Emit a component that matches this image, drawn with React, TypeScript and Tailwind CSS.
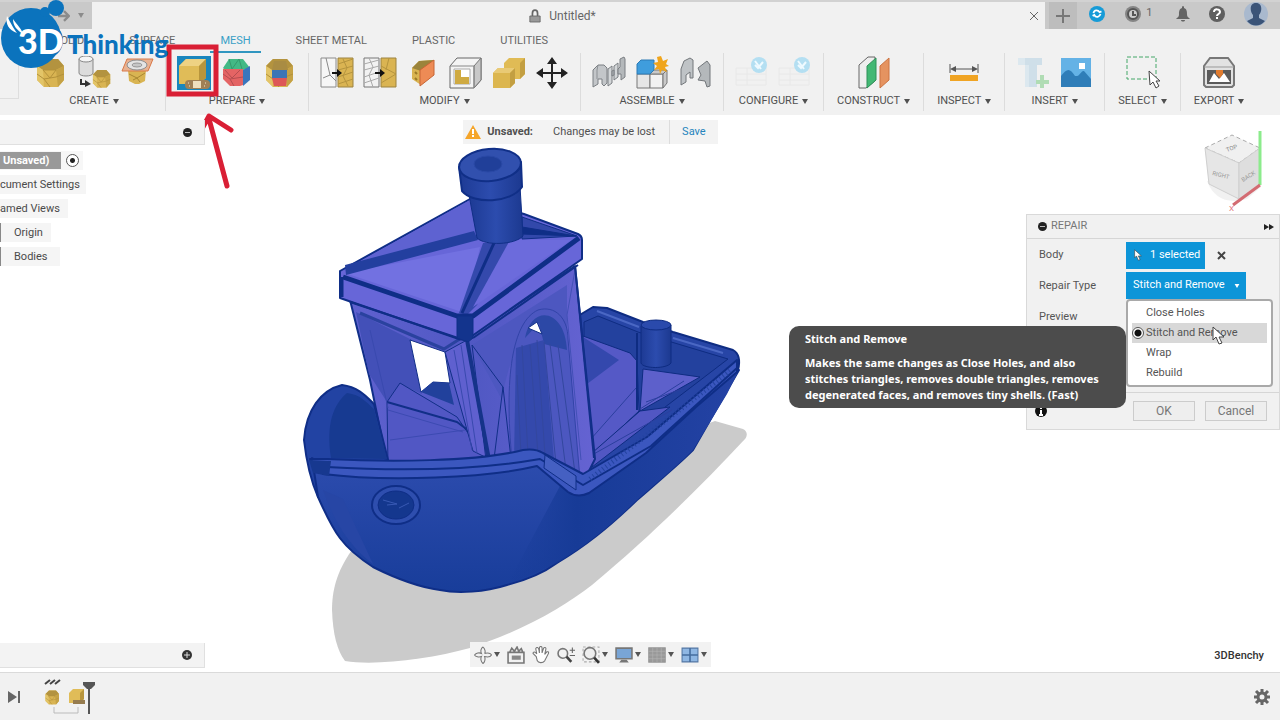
import React, { useState } from 'react';

interface IconProps {
  className?: string;
}

interface ToolGroup {
  label: string;
  tools: { name: string; icon: React.ReactNode; active?: boolean; disabled?: boolean }[];
}

const REPAIR_TYPES = ['Close Holes', 'Stitch and Remove', 'Wrap', 'Rebuild'];
const TABS = ['SOLID', 'SURFACE', 'MESH', 'SHEET METAL', 'PLASTIC', 'UTILITIES'];

const Icon: React.FC<{ children: React.ReactNode; className?: string }> = ({ children, className = 'size-[34px]' }) => (
  <svg viewBox="0 0 34 34" className={className} fill="none" aria-hidden="true">
    {children}
  </svg>
);

const Caret: React.FC<IconProps> = ({ className = 'h-[5px] w-[6px]' }) => (
  <svg viewBox="0 0 6 5" className={className} fill="currentColor" aria-hidden="true">
    <path d="M0 0h6L3 5z" />
  </svg>
);

/* faceted gold solid shared by several mesh tools */
const GoldMesh: React.FC<{ transform?: string }> = ({ transform }) => (
  <g transform={transform}>
    <path d="M3 10 10 3h14l6 7v14l-6 7H10l-7-7z" fill="#d9b452" />
    <path d="M3 10 10 3h14l6 7-8 4H9z" fill="#b3933f" />
    <path d="M3 10v14l7 7 -1-17z" fill="#e3c568" />
    <path d="M22 14l8-4v14l-6 7z" fill="#c5a245" />
    <path d="M9 14h13M3 18l7 5 12-2 8-3M10 23l6 8M9 14l7 8 6-8" stroke="#b3913a" />
  </g>
);

const CREATE_TOOLS = [
  {
    name: 'Insert Mesh',
    icon: (
      <Icon>
        <GoldMesh />
        <path d="M5 2 12-1l4 2-6 6-5-1z" fill="#3c93dc" />
      </Icon>
    ),
  },
  {
    name: 'Tessellate',
    icon: (
      <Icon>
        <path d="M2 3v14c0 4 14 4 14 0V3z" fill="#dcdcdc" stroke="#888" />
        <ellipse cx="9" cy="3" rx="7" ry="3" fill="#f5f5f5" stroke="#888" />
        <path d="M4 23v5h6" stroke="#333" strokeWidth="2" />
        <path d="m8 24 6 4-6 3z" fill="#333" />
        <GoldMesh transform="translate(14 12) scale(.64)" />
      </Icon>
    ),
  },
  {
    name: 'Mesh Section Sketch',
    icon: (
      <Icon>
        <path d="m8 14 1 11 6 3h4l6-3 1-11z" fill="#d9b452" />
        <path d="m9 18 8 4 8-5M13 24l4-2 3 4" stroke="#a98732" />
        <path d="M7 3h26l-5 12H2z" fill="#e9b291" stroke="#d97848" />
        <ellipse cx="17" cy="9" rx="10" ry="5" fill="#e4e4e4" stroke="#8d8d8d" />
        <ellipse cx="17" cy="9" rx="5" ry="2" fill="#c6c6c6" stroke="#999" />
      </Icon>
    ),
  },
];

const PREPARE_TOOLS = [
  {
    name: 'Repair',
    active: true,
    icon: (
      <Icon>
        <path d="M2 10 9 3h20v19l-7 6H2z" fill="#e0bc58" />
        <path d="M2 10 9 3h20l-7 7z" fill="#eed283" />
        <path d="M22 10 29 3v19l-7 6z" fill="#b8953c" />
        <rect x="8" y="24" width="25" height="9" rx="4" fill="#a08055" />
        <rect x="16" y="25" width="8" height="7" fill="#efdfbe" />
        <path d="M11 27h1m0 3h1m15-3h1m-2 3h1" stroke="#f4e6c9" />
      </Icon>
    ),
  },
  {
    name: 'Generate Face Groups',
    icon: (
      <Icon>
        <path d="M3 12 9 3h14l7 9-7 2H5z" fill="#42b985" />
        <path d="M3 13h20v16l-3 1H10l-7-7z" fill="#e46464" />
        <path d="m23 14 7-4v14l-7 6z" fill="#3a76bd" />
        <path d="M3 18l7 5 13-2M10 23l4 7M5 14l7 8 8-8" stroke="#b44d50" />
        <path d="m9 3 3 10 7-10 3 10" stroke="#349a6c" />
      </Icon>
    ),
  },
  {
    name: 'Combine Face Groups',
    icon: (
      <Icon>
        <GoldMesh />
        <path d="m9 14 2-9h12l2 9z" fill="#a98c43" />
        <path d="M9 14h15v8H9z" fill="#3c75b5" />
        <path d="M9 22h15l-1 8H11z" fill="#dd5757" />
      </Icon>
    ),
  },
];

const MODIFY_TOOLS = [
  {
    name: 'Remesh',
    icon: (
      <Icon>
        <path d="M1 2h15v29H1zM6 2l4 17-7 3M10 19l6 6" stroke="#8a8a8a" fill="#f6f6f6" />
        <path d="M18 2h15v29H18z" fill="#dab452" stroke="#9c8340" />
        <path d="m18 8 15-5m-15 11 15-4m-15 11 15-5m-15 12 15-5M23 3l4 9-4 8 5 10" stroke="#b5943e" />
        <path d="M12 17h6" stroke="#111" strokeWidth="2" />
        <path d="m17 13 5 4-5 4z" fill="#111" />
      </Icon>
    ),
  },
  {
    name: 'Reduce',
    icon: (
      <Icon>
        <path d="M1 2h15v29H1z" stroke="#777" fill="#f2f2f2" />
        <path d="m1 8 15-4M1 14l15-4M1 21l15-5M1 27l15-5M6 2l4 9-4 8 4 12" stroke="#aaa" />
        <path d="M18 2h15v29H18z" fill="#dab452" stroke="#9c8340" />
        <path d="m18 10 15 8-15 9M26 2l-3 12" stroke="#b5943e" />
        <path d="M12 17h6" stroke="#111" strokeWidth="2" />
        <path d="m17 13 5 4-5 4z" fill="#111" />
      </Icon>
    ),
  },
  {
    name: 'Plane Cut',
    icon: (
      <Icon>
        <path d="m6 12 7-7 15-1-13 11v14l-9-6z" fill="#d9b452" />
        <path d="m6 12 7-7 15-1-13 11z" fill="#9b843b" />
        <path d="m9 16 2 2m-2 4 2 2" stroke="#9b7a29" strokeWidth="2" />
        <path d="M14 14 28 4v15L14 30z" fill="#ed8b55" stroke="#c76535" />
      </Icon>
    ),
  },
  {
    name: 'Shell',
    icon: (
      <Icon>
        <path d="M1 10 8 2h24v22l-7 8H1z" fill="#f4f4f4" stroke="#666" strokeLinejoin="round" />
        <path d="M25 10 32 2v22l-7 8z" fill="#c8c8c8" stroke="#777" />
        <path d="M1 10h24v22" stroke="#888" />
        <path d="M5 13h16v15H5z" fill="#fff" stroke="#aaa" />
        <path d="M6 14h6v7h8v7H6z" fill="#cfaa42" />
      </Icon>
    ),
  },
  {
    name: 'Combine',
    icon: (
      <Icon>
        <path d="m12 7 5-5h16v16l-5 5H12z" fill="#e0bb55" />
        <path d="m28 7 5-5v16l-5 5z" fill="#c39f42" />
        <path d="m1 17 5-5h17v15l-5 5H1z" fill="#dcb64f" />
        <path d="m1 17 5-5h17l-5 5z" fill="#e9ca75" />
        <path d="m18 17 5-5v15l-5 5z" fill="#c39f42" />
      </Icon>
    ),
  },
  {
    name: 'Move/Copy',
    icon: (
      <Icon>
        <path d="M17 6v22M6 17h22" stroke="#222" strokeWidth="2" />
        <path d="m17 1 5 7H12zm0 32 5-7H12zM1 17l7-5v10zm32 0-7-5v10z" fill="#222" />
      </Icon>
    ),
  },
];

const ASSEMBLE_TOOLS = [
  {
    name: 'Joint',
    icon: (
      <Icon>
        <path d="m1 14 5-5h6l3 3v15l-3 3-2-2v-5H6v5l-5 3z" fill="#c3c6c9" stroke="#7b7f83" />
        <path d="m16 13 4-3v17l-4 3zM22 10l4-3v14l-4 3z" fill="#d3d6d8" stroke="#7b7f83" />
        <path d="m20 15 2-1v5l-2 1zM26 13l2-2V3l4-2 1 2v18l-4 3v-6h-3z" fill="#b4b8bb" stroke="#7b7f83" />
        <path d="m6 9-1 5v9" stroke="#8c9094" />
      </Icon>
    ),
  },
  {
    name: 'New Component',
    icon: (
      <Icon>
        <path d="M2 18h13v14H2z" fill="#e6e6e6" stroke="#777" />
        <path d="M15 18h13v14H15z" fill="#f2f2f2" stroke="#777" />
        <path d="m15 18 4-4h13l-4 4zm13 0 4-4v13l-4 5z" fill="#c9c9c9" stroke="#777" />
        <path d="m2 8 4-4h13v10l-4 4H2z" fill="#3f9ddd" stroke="#2d7bb5" />
        <path d="m26 0 2 5 5-2-2 5 3 2-4 1 2 5-5-2-2 4-1-5-5 1 3-4-4-3 5-1-1-5z" fill="#f0a51c" />
      </Icon>
    ),
  },
  {
    name: 'As-built Joint',
    icon: (
      <Icon>
        <path d="m3 13 3-8 6-3 3 2v18h-3v-6l-4 3v7l-5 3z" fill="#bfc3c6" stroke="#73777b" />
        <path d="m20 12 9-7 3 4v21l-3 1-2-6-7-1 3-5z" fill="#b4b8bb" stroke="#73777b" />
      </Icon>
    ),
  },
];

const CONFIGURE_ICON = (
  <Icon>
    <path d="M1 12h30v17H1zM1 18h30M1 24h30M12 12v17" stroke="#e8e8e8" />
    <circle cx="24" cy="9" r="8" fill="#b4dff2" />
    <path d="m20 9 3 3 5-6M20 5l6 8" stroke="#effaff" strokeWidth="2" />
  </Icon>
);

const GROUPS: ToolGroup[] = [
  { label: 'CREATE', tools: CREATE_TOOLS },
  { label: 'PREPARE', tools: PREPARE_TOOLS },
  { label: 'MODIFY', tools: MODIFY_TOOLS },
  { label: 'ASSEMBLE', tools: ASSEMBLE_TOOLS },
  {
    label: 'CONFIGURE',
    tools: [
      { name: 'Configure', icon: CONFIGURE_ICON, disabled: true },
      { name: 'Configuration Table', icon: CONFIGURE_ICON, disabled: true },
    ],
  },
  {
    label: 'CONSTRUCT',
    tools: [
      {
        name: 'Offset Plane',
        icon: (
          <Icon>
            <path d="M2 9 11 1h7v24l-9 7H2z" fill="#eee" stroke="#666" />
            <path d="m10 10 9-8v22l-9 8z" fill="#43b874" stroke="#2f9159" />
            <path d="m23 10 9-8v22l-9 8z" fill="#e59360" stroke="#cc7340" />
          </Icon>
        ),
      },
    ],
  },
  {
    label: 'INSPECT',
    tools: [
      {
        name: 'Measure',
        icon: (
          <Icon>
            <path d="M3 8v9m28-9v9M5 13h24" stroke="#555" />
            <path d="m3 13 6-3v6zm28 0-6-3v6z" fill="#555" />
            <path d="M3 19h28v6H3z" fill="#f0a423" />
          </Icon>
        ),
      },
    ],
  },
  {
    label: 'INSERT',
    tools: [
      {
        name: 'Insert Fastener',
        disabled: true,
        icon: (
          <Icon>
            <path d="M2 2h24v7h-5v22H9V9H2z" fill="#cfdfe9" />
            <path d="M2 2h7v7H2zm7 7h4v22H9z" fill="#dce8ef" />
            <path d="M26 19v13m-6-6h13" stroke="#b0dcb4" strokeWidth="4" />
          </Icon>
        ),
      },
      {
        name: 'Decal',
        icon: (
          <Icon>
            <path d="M2 2h30v29H2z" fill="#64b2e6" />
            <path d="M2 20c6-8 9-8 14 0 5 1 6-6 9-5l7 8v8H2z" fill="#2f7db8" />
            <path d="M20 7h6v6h-6z" fill="#fff" />
          </Icon>
        ),
      },
    ],
  },
  {
    label: 'SELECT',
    tools: [
      {
        name: 'Select',
        icon: (
          <Icon>
            <path d="M1 1h29v22H1z" stroke="#44a768" strokeDasharray="4 2" />
            <path d="m23 15 1 14 3-3 3 6 3-2-3-5h4z" fill="#fff" stroke="#444" />
          </Icon>
        ),
      },
    ],
  },
  {
    label: 'EXPORT',
    tools: [
      {
        name: '3D Print',
        icon: (
          <Icon>
            <path d="m2 10 6-8h18l6 8v19l-2 2H4l-2-2z" fill="#e2e2e2" stroke="#777" strokeWidth="2" />
            <path d="M5 14h24v14H5z" fill="#5b5b5b" />
            <path d="M2 11h30" stroke="#999" />
            <path d="m7 26 5-9 5 6 5-6 6 9z" fill="#fff" />
            <path d="M14 14h7v4l-3 4-4-4z" fill="#e17c2f" />
          </Icon>
        ),
      },
    ],
  },
];

const Logo: React.FC = () => (
  <svg viewBox="0 0 170 70" className="pointer-events-none absolute left-0 top-0 z-20 w-[170px]" role="img" aria-label="3D Thinking">
    <g fill="#0b73bd">
      <circle cx="31" cy="38" r="30" />
      <circle cx="56" cy="8" r="8" />
      <circle cx="45" cy="12" r="5" />
      <path d="M40 24h8c20 0 20 33 0 33H38z" />
    </g>
    <path d="M7 16c-2 8 2 14 10 17-3-4-6-9-10-17zM13 19c0 7 4 11 10 15-2-6-5-8-10-15z" fill="#fff" />
    <text x="18" y="54" fontSize="34" fontWeight="900" fontFamily="Lato, sans-serif" fill="#fff">
      3D
    </text>
    <text x="67" y="54" fontSize="26" fontWeight="900" fontFamily="Lato, sans-serif" fill="#0b73bd">
      Thinking
    </text>
  </svg>
);

const TitleBar: React.FC = () => (
  <div className="flex h-[29px] items-stretch border-t-2 border-[#d2d2d2] bg-[#c9c9c9]">
    <div className="flex w-[92px] items-center justify-end gap-2 pr-2 text-[#8b8b8b]">
      <svg viewBox="0 0 10 10" className="size-3" fill="none" stroke="currentColor" strokeWidth="2" aria-hidden="true">
        <path d="M0 5h9M5 1l4 4-4 4" />
      </svg>
      <Caret />
    </div>
    <div className="flex flex-1 items-center bg-[#f1f1f1] pr-[6px]">
      <div className="flex flex-1 items-center justify-center gap-2 pl-1 text-xs text-[#666]">
        <svg viewBox="0 0 14 16" className="h-[14px] w-3" fill="none" aria-hidden="true">
          <path d="M4 8V5c0-5 6-5 6 0v3" stroke="#666" strokeWidth="2" />
          <path d="M1 8h12v7H1z" fill="#999" stroke="#666" />
        </svg>
        Untitled*
      </div>
      <button aria-label="Close tab" className="text-[#666]">
        <svg viewBox="0 0 10 10" className="size-[10px]" stroke="currentColor" aria-hidden="true">
          <path d="m1 1 8 8m0-8L1 9" />
        </svg>
      </button>
    </div>
    <div className="flex w-[235px] items-center pl-1 pr-3">
      <button aria-label="New tab" className="mr-3 flex h-full w-[28px] items-center justify-center bg-[#bdbdbd]">
        <svg viewBox="0 0 14 14" className="size-[14px]" stroke="#777" strokeWidth="2" aria-hidden="true">
          <path d="M7 0v14M0 7h14" />
        </svg>
      </button>
      <div className="flex flex-1 items-center justify-between pb-1">
        <button aria-label="Extensions">
          <svg viewBox="0 0 18 18" className="size-4" fill="none" aria-hidden="true">
            <circle cx="9" cy="9" r="9" fill="#169bd7" />
            <path d="M5 8c1-4 5-4 7-1l2-1M4 11l2-1c2 4 6 2 7-1" stroke="#fff" strokeWidth="2" />
          </svg>
        </button>
        <button className="flex items-center gap-1 text-[11px] text-[#666]" aria-label="Job status 1">
          <svg viewBox="0 0 18 18" className="size-[18px]" fill="none" aria-hidden="true">
            <circle cx="9" cy="9" r="8" fill="#858585" />
            <circle cx="9" cy="9" r="5" fill="#ccc" stroke="#555" strokeWidth="2" />
            <path d="M9 6v4h3" stroke="#555" strokeWidth="2" />
          </svg>
          1
        </button>
        <button aria-label="Notifications" className="ml-1">
          <svg viewBox="0 0 14 16" className="h-4 w-[14px]" fill="#636363" aria-hidden="true">
            <path d="M7 0c1 0 1 1 1 2 3 1 3 4 3 6 0 3 1 3 3 5H0c2-2 3-2 3-5 0-2 0-5 3-6 0-1 0-2 1-2zM5 14h4c0 2-4 2-4 0z" />
          </svg>
        </button>
        <button aria-label="Help">
          <svg viewBox="0 0 16 16" className="size-4" fill="none" aria-hidden="true">
            <circle cx="8" cy="8" r="8" fill="#5f5f5f" />
            <path d="M5 6c0-4 6-3 6 0 0 2-3 2-3 4m0 1v2" stroke="#fff" strokeWidth="2" />
          </svg>
        </button>
        <button aria-label="Account">
          <svg viewBox="0 0 24 24" className="size-6" aria-hidden="true">
            <circle cx="12" cy="12" r="12" fill="#a9b9ce" />
            <path d="M12 1c7 0 6 9 3 12v3l6 3c-5 6-13 6-18 0l6-3v-3C6 10 5 1 12 1z" fill="#3b5478" />
          </svg>
        </button>
      </div>
    </div>
  </div>
);

const Annotation: React.FC = () => (
  <svg viewBox="0 0 68 146" className="pointer-events-none absolute -left-[11px] -top-[12px] z-10 w-[68px] max-w-none" fill="none" stroke="#d91f35" aria-hidden="true">
    <path d="M3 3h47v47H3z" strokeWidth="5" />
    <path d="m61 142-18-67M31 94l12-22 22 14" strokeWidth="5" strokeLinecap="round" strokeLinejoin="round" />
  </svg>
);

const Ribbon: React.FC = () => (
  <div className="flex h-[62px] items-stretch pb-1">
    <div className="mb-3 mr-1 w-[19px] border-b border-r border-[#dedede]" />
    {GROUPS.map((group) => (
      <div
        key={group.label}
        className={`flex flex-col items-center border-r border-[#dcdcdc] last:border-r-0 ${group.tools.length === 1 ? 'px-[10px]' : 'px-[11px]'}`}
      >
        <div className="flex gap-[9px] pt-[3px]">
          {group.tools.map((tool) => (
            <button
              key={tool.name}
              aria-label={tool.name}
              disabled={tool.disabled}
              className={`relative ${tool.active ? 'bg-[#1a86bd]' : ''}`}
            >
              {tool.icon}
              {tool.active && <Annotation />}
            </button>
          ))}
        </div>
        <button className="flex items-center gap-1 px-[3px] pt-1 text-[11px] leading-[14px] text-[#505050]">
          {group.label} <Caret />
        </button>
      </div>
    ))}
  </div>
);

const Boat: React.FC = () => (
  <svg viewBox="0 115 1280 557" className="absolute inset-0 h-full w-full" role="img" aria-label="3DBenchy mesh body">
    <defs>
      <linearGradient id="hull" x1="0" y1="0" x2="0" y2="1">
        <stop offset="0" stopColor="#3f55bb" />
        <stop offset=".4" stopColor="#2d4cae" />
        <stop offset="1" stopColor="#183d9a" />
      </linearGradient>
      <linearGradient id="side" x1="0" y1="0" x2="1" y2="0">
        <stop offset="0" stopColor="#173b97" stopOpacity="0" />
        <stop offset=".3" stopColor="#173b97" />
        <stop offset="1" stopColor="#2442a4" />
      </linearGradient>
      <linearGradient id="wall" x1="0" y1="0" x2="1" y2="0">
        <stop offset="0" stopColor="#5f61cf" />
        <stop offset=".5" stopColor="#5058c3" />
        <stop offset="1" stopColor="#6563d2" />
      </linearGradient>
      <linearGradient id="stack" x1="0" y1="0" x2="1" y2="0">
        <stop offset="0" stopColor="#1d3a94" />
        <stop offset=".5" stopColor="#2c4cae" />
        <stop offset="1" stopColor="#1c3990" />
      </linearGradient>
    </defs>
    <path d="M352 550c-16 22-20 42-20 60 1 25 5 40 13 51 30 5 85-2 125-13 55-18 95-42 122-63 60-50 110-100 153-146 3-4 2-8-2-10l-28-8z" fill="#cbcbcb" />

    {/* stern */}
    <g stroke="#0e2c82" strokeLinejoin="round">
      <path d="M578 316l15-9 14 1 36 14 30 10 60 18c7 4 7 12 5 20L590 492l-12-35z" fill="#2745a6" strokeWidth="2" />
      <path d="M584 322l14-6 40 16 90 27-144 110z" fill="#23419e" />
      <path d="M583 336l47 17 7 8 2 50-47 44z" fill="#5559c6" strokeWidth="1" />
      <path d="M583 337l36 23-32 24z" fill="#3448ad" stroke="none" />
      <path d="M643 369l57 8-60 34z" fill="#5d60cb" strokeWidth="1" />
      <path d="M640 411l30-4-78 60v-14z" fill="#5257c3" strokeWidth="1" />
      <path d="m640 409 44-28M646 402l44-16M590 440l46-52M592 455l80-45" fill="none" stroke="#2b3f9f" />
      <path d="M637 333v77" fill="none" strokeWidth="2" />
      <path d="M641 326v37c2 6 26 6 30 0v-38z" fill="url(#stack)" strokeWidth="1" />
      <ellipse cx="656" cy="325" rx="15" ry="5" fill="#2a4aac" />
      <path d="m597 311 42 16m34 11 50 15" fill="none" stroke="#4a67c4" strokeWidth="2" />
    </g>

    {/* cabin */}
    <g stroke="#112f88" strokeLinejoin="round">
      <path d="M350 300l117 38 108-72 20 193-12 24-45-24-150 9-18-88z" fill="url(#wall)" strokeWidth="2" />
      <path d="M356 312l56 28 10 54-22-10-13 18-18-28z" fill="#4350b8" stroke="none" />
      <path d="M387 402l13-19 57 34 26 38v10h-95z" fill="#5157c4" strokeWidth="1" />
      <path d="M387 402l70 20 12 9" fill="none" strokeWidth="2" />
      <path d="M390 440l75-10M388 410l75 22" fill="none" stroke="#3c4ab2" />
      <path d="M410 340l35 12 5 31-17-1-12 10z" fill="#fff" strokeWidth="1" />
      <path d="M421 392l12-10 16 1 5 22z" fill="#21419c" stroke="none" />
      <path d="M445 352l22-12 20 118-14-7z" fill="#5f60cf" strokeWidth="1" />
      <path d="M360 313l84 36 22-14" fill="none" strokeWidth="3" stroke="#2a429f" />
      <path d="M472 345l95-60v60l-26-10-14-7-18 40-8 30z" fill="#4d57c0" stroke="none" />
      <path d="M512 460c-8-82 0-138 26-150 17-5 30 8 30 29l12 140-20-16-24-14z" fill="#4c57c0" stroke="#3244a8" />
      <path d="M525 338c6-34 40-30 42 12l-23-6-5-21z" fill="#2c48a6" stroke="none" />
      <path d="M516 348l28-8 10 120-14 2-26-2z" fill="#3449ac" stroke="none" />
      <path d="M528 328l9-6 5 12z" fill="#fff" strokeWidth="1" />
      <path d="M472 345l31 42-9 72-8 1zM503 387l8 72" fill="none" strokeWidth="1" />
      <path d="M522 345l6 110M530 345l8 110M537 340l8 115M544 342l12 122M550 344l16 126M558 345l17 128M517 375l4 80" fill="none" stroke="#33479f" />
      <path d="M575 270l-8 45 14 145" fill="none" stroke="#4250b6" />
      <path d="M467 340l22 120" fill="none" strokeWidth="4" stroke="#153389" />
      <path d="M575 266l19 192" fill="none" strokeWidth="2" />
      <path d="M461 345l16 108M454 350l18 100M370 330l18 78" fill="none" stroke="#3949af" />
    </g>

    {/* roof */}
    <g stroke="#0f2e87" strokeLinejoin="round">
      <path d="M340 271l130-72 54 15 54 20q4 2 4 6v19l-110 77q-8 6-16 2l-116-40v-25z" fill="#6766d8" strokeWidth="2" />
      <path d="M343 271l127-71 8 36z" fill="#5e62d1" stroke="none" />
      <path d="M345 273l120 40 15-66z" fill="#7271e1" stroke="none" />
      <path d="M345 265l129-34 4 9-132 35z" fill="#233f9f" stroke="none" />
      <path d="M483 243h27l-33 62-10 10-8-2z" fill="#3449ac" stroke="none" />
      <path d="M494 243l-32 70" fill="none" strokeWidth="3" />
      <path d="M510 240h61l-98 67z" fill="#6c6bdc" stroke="none" />
      <path d="M522 217l55 19-55 3z" fill="#3248aa" strokeWidth="1" />
      <path d="M522 227l54 9-54-2z" fill="#0f2e87" />
      <path d="M343 277l114 39h16l106-78" fill="none" strokeWidth="5" />
      <path d="M350 302l108 36M473 338l105-73" fill="none" strokeWidth="2" />
      <path d="M457 316h16v22l-5 4-11-4z" fill="#13348d" />
      <path d="M342 277v20" fill="none" strokeWidth="3" />
    </g>
    <g stroke="#102f87">
      <path d="M469 195l8 43c8 8 38 7 46-2l-3-50z" fill="url(#stack)" />
      <path d="M459 167l3 24c12 14 49 12 60-4l-1-25z" fill="url(#stack)" strokeWidth="2" strokeLinejoin="round" />
      <ellipse cx="490" cy="165" rx="31" ry="16" fill="#3150ae" strokeWidth="2" transform="rotate(-5 490 165)" />
      <ellipse cx="488" cy="164" rx="14" ry="8" fill="#203f99" stroke="#2a49a6" />
    </g>

    {/* hull */}
    <g stroke="#0f2e87" strokeLinejoin="round">
      <path d="M318 497c-8-18-12-39-14-57 2-30 17-50 38-55 16 2 24 11 32 19l14 56-60 15z" fill="#2243a3" strokeWidth="2" />
      <path d="M331 458c-5-34 2-53 16-65 14 2 19 9 27 16l13 50z" fill="#173a91" stroke="none" />
      <path d="M318 497c16 36 24 50 55 70 24 12 45 20 67 23 18 4 45 2 67-5 20-5 35-11 50-22 28-17 50-34 80-63 30-26 43-37 56-50l46-80-156 120-40-32-216 9-15-9z" fill="url(#hull)" strokeWidth="2" />
      <path d="M560 486l30 6 148-120-11 22-34 56c-13 13-26 24-56 50-30 29-52 46-80 63-16 8-32 14-50 22z" fill="url(#side)" stroke="none" />
      <path d="M323 490c12 34 28 58 50 74l-30-65z" fill="#2746a5" stroke="none" />
      <path d="M310 459l17 0c60 3 150 3 196-9q12-2 20 3l40 21 64-37 90-77v12l-41 35-50 46-57 40c-8 4-15 3-21-1l-31-26c-50 12-150 16-214 8z" fill="#3b57bf" strokeWidth="2" />
      <path d="M327 467c70 4 150 3 213-8l43 26 68-39 86-78" fill="none" strokeWidth="2" />
      <path d="M309 460l22 1-2 15-16-3z" fill="#17388f" stroke="none" />
      <path d="m545 455 31 21v14l-32-22z" fill="#4560c2" />
      <path d="m590 479 140-108" fill="none" stroke="#2343a0" strokeWidth="5" strokeDasharray="1 3" />
      <ellipse cx="396" cy="505" rx="24" ry="19" fill="#2e4eae" strokeWidth="2" />
      <ellipse cx="396" cy="505" rx="18" ry="14" fill="#14378e" />
      <path d="m383 500 14 4-10 1m12 3 10-5" fill="none" stroke="#3859b4" />
    </g>
  </svg>
);

const PointerIcon: React.FC<IconProps> = ({ className }) => (
  <svg viewBox="0 0 13 19" className={className} fill="#fff" stroke="#444" aria-hidden="true">
    <path d="m1 1v13l3-3 3 7 3-1-3-6h5z" />
  </svg>
);

const BrowserPanel: React.FC = () => (
  <aside className="z-10 flex w-[205px] flex-col justify-between pb-1 pt-[5px]">
    <div>
      <div className="flex h-[25px] items-center justify-end border-b border-r border-[#e0e0e0] bg-[#f3f3f3] pr-3">
        <button aria-label="Collapse browser" className="flex size-[9px] items-center justify-center rounded-full bg-[#222]">
          <span className="h-px w-[5px] bg-[#bbb]" />
        </button>
      </div>
      <ul className="flex flex-col items-start gap-[5px] pt-[6px] text-[11px] leading-[19px] text-[#4a4a4a]">
        <li className="flex h-[19px] items-center gap-[5px] bg-[#f7f7f7] pr-1">
          <span className="bg-[#999] pl-[3px] pr-3 font-bold leading-[17px] text-white">Unsaved)</span>
          <input
            type="radio"
            aria-label="Activate component"
            defaultChecked
            className="size-[13px] appearance-none rounded-full border border-[#555] bg-[radial-gradient(circle,#222_0_2px,white_3px)]"
          />
        </li>
        <li className="bg-[#f5f5f5] pr-[6px]">cument Settings</li>
        <li className="bg-[#f5f5f5] pr-2">amed Views</li>
        <li className="border-l border-[#888] bg-[#f5f5f5] pl-[13px] pr-2">Origin</li>
        <li className="border-l border-[#888] bg-[#f5f5f5] pl-[13px] pr-3">Bodies</li>
      </ul>
    </div>
    <div className="flex h-[25px] items-center justify-end border-b border-r border-[#e0e0e0] bg-[#f3f3f3] pr-3">
      <button aria-label="Expand comments">
        <svg viewBox="0 0 10 10" className="size-[10px]" aria-hidden="true">
          <circle cx="5" cy="5" r="5" fill="#333" />
          <path d="M5 2v6M2 5h6" stroke="#ddd" />
        </svg>
      </button>
    </div>
  </aside>
);

const NavBar: React.FC = () => (
  <nav aria-label="View navigation" className="flex h-[25px] items-center gap-[7px] bg-[#f2f2f2] px-1 text-[#555]">
    <button aria-label="Orbit" className="flex items-center gap-[2px]">
      <Icon className="size-[18px]">
        <path d="M17 2c4 3 5 10 3 12 6-2 12 0 13 3-2 4-8 4-13 3 2 5 0 11-3 13-4-3-5-9-3-13-5 2-11 0-13-3 3-4 9-5 13-3-2-4-1-10 3-12z" stroke="#777" strokeWidth="2" />
      </Icon>
      <Caret />
    </button>
    <button aria-label="Look at">
      <Icon className="size-[18px]">
        <path d="M2 12h30v20H2zM5 12l4-8 5 6 5-8 3 8 5-5 3 7" stroke="#777" strokeWidth="3" />
        <path d="M9 18h17v8H9z" fill="#888" />
      </Icon>
    </button>
    <button aria-label="Pan">
      <Icon className="size-[18px]">
        <path d="M8 20 2 14c0-4 4-3 7 1L7 5c2-4 5-2 6 2l1 6V3c2-4 5-2 5 1v9l3-9c3-3 5 0 4 3l-2 9 4-5c4-1 4 2 2 5l-6 12c-4 5-12 4-14 0z" stroke="#777" strokeWidth="2" fill="#fff" />
      </Icon>
    </button>
    <button aria-label="Zoom">
      <Icon className="size-[18px]">
        <circle cx="11" cy="14" r="9" stroke="#777" strokeWidth="3" />
        <path d="m18 20 9 10" stroke="#444" strokeWidth="5" />
        <path d="M29 3v10m-5-5h10M24 18h10" stroke="#666" strokeWidth="2" />
      </Icon>
    </button>
    <button aria-label="Fit" className="flex items-center gap-[2px]">
      <Icon className="size-[18px]">
        <path d="M2 2h30v28H2z" stroke="#aaa" strokeWidth="2" strokeDasharray="5 4" />
        <circle cx="15" cy="14" r="11" stroke="#777" strokeWidth="3" fill="#eee" />
        <path d="m23 22 9 10" stroke="#333" strokeWidth="5" />
      </Icon>
      <Caret />
    </button>
    <button aria-label="Display settings" className="flex items-center gap-[2px]">
      <Icon className="size-[18px]">
        <path d="M2 4h30v20H2z" fill="#79a5d6" stroke="#777" strokeWidth="3" />
        <path d="M12 26h10l4 5H8z" fill="#777" />
      </Icon>
      <Caret />
    </button>
    <button aria-label="Grid and snaps" className="flex items-center gap-[2px]">
      <Icon className="size-[18px]">
        <path d="M1 3h32v28H1z" fill="#999" stroke="#888" />
        <path d="M1 10h32M1 17h32M1 24h32M9 3v28M17 3v28M25 3v28" stroke="#b9b9b9" />
      </Icon>
      <Caret />
    </button>
    <button aria-label="Viewports" className="flex items-center gap-[2px]">
      <Icon className="size-[18px]">
        <path d="M2 4h30v26H2z" fill="#8fb7e3" stroke="#5376a3" strokeWidth="2" />
        <path d="M17 4v26M2 17h30" stroke="#456d9e" strokeWidth="3" />
      </Icon>
      <Caret />
    </button>
  </nav>
);

const ViewCube: React.FC = () => (
  <svg viewBox="0 0 76 91" className="mr-[3px] mt-2 h-[91px] w-[76px]" role="img" aria-label="View cube" fontFamily="Roboto, sans-serif" fontSize="6">
    <path d="M6 58q10 26 40 18l14-12z" fill="#e4e4e4" opacity=".5" />
    <path d="M4 25 31 12l28 13-21 15z" fill="#f0f0f0" stroke="#aaa" strokeDasharray="4 3" />
    <path d="m4 25 34 15v36L8 61z" fill="#e6e6e6" stroke="#cfcfcf" />
    <path d="m38 40 21-15v37L38 76z" fill="#dedede" stroke="#cfcfcf" />
    <path d="M59 62V8" stroke="#8ceb8c" strokeWidth="3" />
    <path d="M59 62 32 82" stroke="#d36b72" strokeWidth="3" />
    <text x="11" y="52" fill="#999" transform="rotate(14 11 52)">RIGHT</text>
    <text x="42" y="59" fill="#999" transform="rotate(-32 42 59)">BACK</text>
    <text x="26" y="29" fill="#888" transform="rotate(-20 26 29)">TOP</text>
    <text x="28" y="88" fill="#e0707a" fontSize="8">X</text>
  </svg>
);

const RepairDialog: React.FC = () => {
  const [repairType, setRepairType] = useState('Stitch and Remove');

  return (
    <section aria-label="Repair" className="w-[254px] border border-[#d9d9d9] bg-[#f1f1f1] text-[11px] text-[#555]">
      <header className="flex h-[24px] items-center gap-1 border-b border-[#d6d6d6] pl-[11px] pr-[5px] text-[#777]">
        <span className="flex size-[9px] items-center justify-center rounded-full bg-[#222]">
          <span className="h-px w-[5px] bg-[#bbb]" />
        </span>
        <h2 className="flex-1">REPAIR</h2>
        <svg viewBox="0 0 10 6" className="w-[10px]" fill="#222" aria-hidden="true">
          <path d="m0 0 5 3-5 3zm5 0 5 3-5 3z" />
        </svg>
      </header>
      <div className="grid grid-cols-[87px_1fr] items-center gap-y-[3px] py-[2px] pl-3">
        <span>Body</span>
        <div className="flex h-7 items-center gap-3">
          <button className="flex h-[27px] items-center gap-2 bg-[#0d95d8] pl-2 pr-[5px] text-white">
            <PointerIcon className="h-3 w-2" />
            1 selected
          </button>
          <button aria-label="Clear selection">
            <svg viewBox="0 0 9 9" className="size-[9px]" stroke="#444" strokeWidth="2" aria-hidden="true">
              <path d="m1 1 7 7m0-7L1 8" />
            </svg>
          </button>
        </div>
        <label htmlFor="repair-type">Repair Type</label>
        <div className="relative h-7">
          <select
            id="repair-type"
            value={repairType}
            onChange={(e) => setRepairType(e.target.value)}
            className="h-[27px] w-[120px] appearance-none bg-[#0d95d8] pl-[7px] text-white"
          >
            {REPAIR_TYPES.map((type) => (
              <option key={type}>{type}</option>
            ))}
          </select>
          <Caret className="pointer-events-none absolute left-[108px] top-3 h-1 w-[6px] text-white" />
          <fieldset className="absolute left-0 top-[27px] z-20 w-[147px] rounded-sm border-2 border-[#a9a9a9] bg-white px-1 py-[2px]">
            {REPAIR_TYPES.map((type) => (
              <label key={type} className="flex h-5 items-center gap-[2px] has-checked:bg-[#d8d8d8]">
                <input
                  type="radio"
                  name="repair"
                  checked={repairType === type}
                  onChange={() => setRepairType(type)}
                  className="size-3 appearance-none rounded-full checked:border checked:border-[#555] checked:bg-[radial-gradient(circle,#111_0_3px,white_4px)]"
                />
                {type}
              </label>
            ))}
            <PointerIcon className="pointer-events-none absolute left-[84px] top-[25px] h-[19px] w-[13px]" />
          </fieldset>
          <div
            role="tooltip"
            className="absolute right-[153px] top-[54px] z-10 w-[337px] rounded-[10px] bg-[#4c4c4c] px-4 py-[5px] font-['Noto_Sans',sans-serif] text-[11px] font-bold leading-4 text-white"
          >
            <p className="pb-2">Stitch and Remove</p>
            <p>
              Makes the same changes as Close Holes, and also
              <br />
              stitches triangles, removes double triangles, removes
              <br />
              degenerated faces, and removes tiny shells. (Fast)
            </p>
          </div>
        </div>
        <span className="leading-7">Preview</span>
      </div>
      <footer className="mt-[59px] flex h-[37px] items-center gap-[10px] border-t border-[#d6d6d6] pl-2 pr-3 text-xs text-[#777]">
        <svg viewBox="0 0 12 12" className="size-3" aria-hidden="true">
          <circle cx="6" cy="6" r="6" fill="#111" />
          <path d="M6 2v2m0 1v5M4 10h4" stroke="#fff" strokeWidth="2" />
        </svg>
        <button className="ml-auto h-5 w-[62px] border border-[#ccc] bg-[#eee]">OK</button>
        <button className="h-5 w-[62px] border border-[#ccc] bg-[#eee]">Cancel</button>
      </footer>
    </section>
  );
};

const Timeline: React.FC = () => (
  <footer className="flex h-12 items-center justify-between border-t border-[#dadada] bg-[#f1f1f1] px-2">
    <div className="flex items-center gap-6">
      <button aria-label="Go to end">
        <svg viewBox="0 0 12 12" className="size-3" fill="#666" aria-hidden="true">
          <path d="m0 0 9 6-9 6zM10 0h2v12h-2z" />
        </svg>
      </button>
      <svg viewBox="0 0 54 38" className="h-[38px] w-[54px]" fill="none" role="img" aria-label="Timeline features">
        <path d="m1 6 5-4m0 4 5-4m0 4 5-4" stroke="#444" strokeWidth="2" />
        <GoldMesh transform="translate(0 11) scale(.5)" />
        <path d="m25 15 4-4h11v10l-4 4H25z" fill="#e0bc58" />
        <path d="m36 15 4-4v10l-4 4z" fill="#b8953c" />
        <path d="M29 22h12v4H29z" fill="#967c4f" />
        <path d="M10 29v6h24v-6" stroke="#bbb" />
        <path d="M39 4h12v3l-4 4h-4l-4-4z" fill="#555" />
        <path d="M45 10v26" stroke="#555" strokeWidth="2" />
      </svg>
    </div>
    <button aria-label="Preferences" className="pr-[2px]">
      <svg viewBox="0 0 16 16" className="size-4" fill="none" stroke="#666" aria-hidden="true">
        <circle cx="8" cy="8" r="4" strokeWidth="3" />
        <path d="M8 0v3m0 10v3M0 8h3m10 0h3M2 2l3 3m6 6 3 3m0-12-3 3m-6 6-3 3" strokeWidth="3" />
      </svg>
    </button>
  </footer>
);

const App: React.FC = () => {
  const [activeTab, setActiveTab] = useState('MESH');

  return (
    <div className="relative flex min-h-screen flex-col overflow-hidden bg-white font-['Roboto','Liberation_Sans',sans-serif]">
      <Logo />
      <header className="relative z-10 bg-[#f1f1f1]">
        <TitleBar />
        <div className="flex h-[24px] gap-[45px] pl-[54px] text-[11px] text-[#666]">
          {TABS.map((tab) => (
            <button
              key={tab}
              onClick={() => setActiveTab(tab)}
              className={`-mx-[10px] border-b-2 px-[10px] pt-[2px] ${activeTab === tab ? 'border-[#3096c0] text-[#3aa0c6]' : 'border-transparent'}`}
            >
              {tab}
            </button>
          ))}
        </div>
        <Ribbon />
      </header>
      <main className="relative flex flex-1 justify-between">
        <Boat />
        <BrowserPanel />
        <div className="z-10 flex flex-1 flex-col items-center justify-between py-[5px]">
          <div className="flex h-6 items-center bg-[#f3f3f3] text-[11px] text-[#505050]">
            <svg viewBox="0 0 16 14" className="ml-[2px] mr-[6px] w-4" aria-hidden="true">
              <path d="m8 0 8 14H0z" fill="#f5a52a" />
              <path d="M8 4v5m0 1v2" stroke="#fff" strokeWidth="2" />
            </svg>
            <strong>Unsaved:</strong>
            <span className="pl-5 pr-[14px]">Changes may be lost</span>
            <button className="h-full border-l border-[#dcdcdc] px-3 text-[#2584bd]">Save</button>
          </div>
          <NavBar />
        </div>
        <div className="z-10 flex w-[304px] flex-col items-end">
          <ViewCube />
          <RepairDialog />
          <p className="mt-auto pb-2 pr-4 text-[11px] font-medium text-[#333]">3DBenchy</p>
        </div>
      </main>
      <Timeline />
    </div>
  );
};

export default App;
